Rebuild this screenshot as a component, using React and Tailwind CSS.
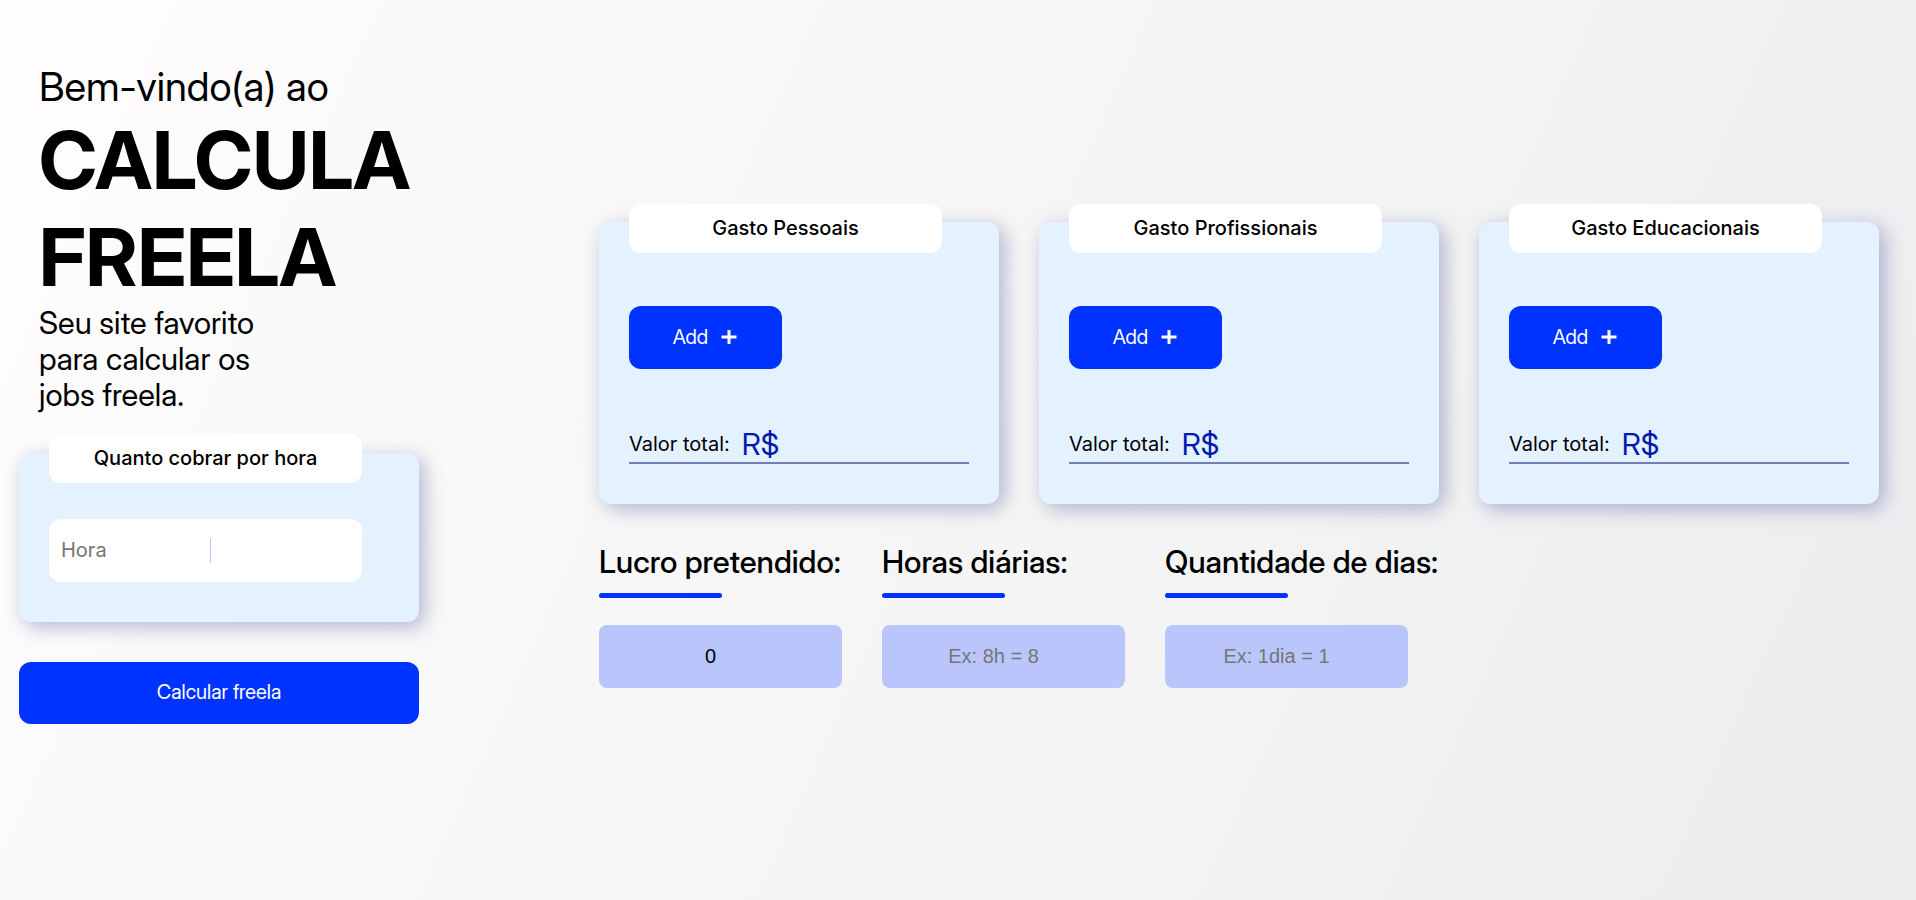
const panel =
  "relative rounded-xl bg-[#e4f2ff] px-[30px] shadow-[5px_5px_20px_rgba(0,0,110,0.28)]";
const tag =
  "absolute left-[30px] h-[49px] w-[313px] rounded-xl bg-white text-center text-[20px] leading-[49px] font-medium";
const display = "font-['Inter_Display',Inter,sans-serif]";

function ExpenseCard({ title }) {
  return (
    <section className={`${panel} h-[282px] w-[400px] pt-[84px]`}>
      <h2 className={`${tag} -top-[18px]`}>{title}</h2>
      <button
        type="button"
        className={`${display} flex h-[63px] w-[153px] items-center justify-center gap-3 rounded-xl bg-[#0033ff] pb-[2px] text-[20px] text-white`}
      >
        Add
        <svg width="18" height="18" viewBox="0 0 18 18" aria-hidden="true">
          <path d="M9 2v14M1.500 9h15" stroke="currentColor" strokeWidth="3" fill="none" />
        </svg>
      </button>
      <p className="mt-[54px] flex items-center gap-3 border-b-2 border-[#7281b5] pt-[3px] leading-9">
        <span className="text-[20px]">Valor total:</span>
        <span className={`${display} text-[30px] text-[#001caf]`}>R$</span>
      </p>
    </section>
  );
}

function Field({ id, label, ...rest }) {
  return (
    <div className="w-[243px]">
      <label htmlFor={id} className={`${display} block text-[31px] leading-9 font-medium whitespace-nowrap`}>
        {label}
      </label>
      <div className="mt-[13px] h-[5px] w-[123px] rounded-full bg-[#0033ff]" />
      <input
        id={id}
        inputMode="numeric"
        className="mt-[27px] block h-[63px] w-full rounded-lg bg-[#bac6fb] pr-5 text-center font-['Liberation_Sans',sans-serif] text-[20px] placeholder:text-[#757575]"
        {...rest}
      />
    </div>
  );
}

export default function App() {
  return (
    <main className="flex min-h-screen justify-between bg-[linear-gradient(114deg,#fffdfe,#f8f8f8_30%,#f2f3f2_66%,#eeeff1_82%,#ecedee)] pt-[63px] pr-[37px] pl-[19px] font-[Inter,sans-serif] text-black">
      <div className="w-[400px]">
        <header className={`${display} pl-5`}>
          <p className="text-[40px] leading-[48px]">Bem-vindo(a) ao</p>
          <h1 className="text-[80px] leading-[97px] font-bold">
            CALCULA
            <br />
            FREELA
          </h1>
          <p className="w-[240px] text-[31px] leading-9">Seu site favorito para calcular os jobs freela.</p>
        </header>
        <section className={`${panel} mt-10 h-[169px] pt-[66px]`}>
          <h2 className={`${tag} -top-[19px]`}>
            <label htmlFor="hora">Quanto cobrar por hora</label>
          </h2>
          <div className="flex h-[63px] w-[313px] items-center rounded-xl bg-white">
            <input
              id="hora"
              placeholder="Hora"
              className="h-[25px] w-[162px] border-r border-[#bac6fb] pb-[2px] pl-3 text-[20px] placeholder:text-[#757575]"
            />
          </div>
        </section>
        <button
          type="button"
          className={`${display} mt-10 h-[62px] w-full rounded-xl bg-[#0033ff] pb-[2px] text-[20px] text-white`}
        >
          Calcular freela
        </button>
      </div>
      <div className="pt-[159px]">
        <div className="flex gap-10">
          <ExpenseCard title="Gasto Pessoais" />
          <ExpenseCard title="Gasto Profissionais" />
          <ExpenseCard title="Gasto Educacionais" />
        </div>
        <form className="mt-10 flex gap-10">
          <Field id="lucro" label="Lucro pretendido:" defaultValue="0" />
          <Field id="horas" label="Horas diárias:" placeholder="Ex: 8h = 8" />
          <Field id="dias" label="Quantidade de dias:" placeholder="Ex: 1dia = 1" />
        </form>
      </div>
    </main>
  );
}
